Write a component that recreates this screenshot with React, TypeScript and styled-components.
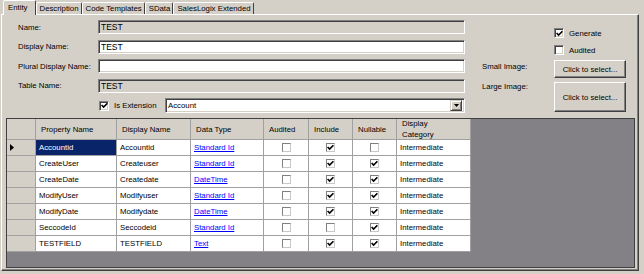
import React from "react";
import styled, { createGlobalStyle } from "styled-components";

const face = "#d4d0c8";
const shadow = "#808080";
const dark = "#404040";

const GlobalStyle = createGlobalStyle`
  body {
    margin: 0;
    background: ${face};
    font-family: "Liberation Sans", Arial, sans-serif;
    font-size: 7.8px;
    color: #000;
  }
`;

type Row = {
  name: string;
  display: string;
  type: string;
  audited: boolean;
  include: boolean;
  nullable: boolean;
};

const rows: Row[] = [
  { name: "Accountid", display: "Accountid", type: "Standard Id", audited: false, include: true, nullable: false },
  { name: "CreateUser", display: "Createuser", type: "Standard Id", audited: false, include: true, nullable: true },
  { name: "CreateDate", display: "Createdate", type: "DateTime", audited: false, include: true, nullable: true },
  { name: "ModifyUser", display: "Modifyuser", type: "Standard Id", audited: false, include: true, nullable: true },
  { name: "ModifyDate", display: "Modifydate", type: "DateTime", audited: false, include: true, nullable: true },
  { name: "SeccodeId", display: "Seccodeid", type: "Standard Id", audited: false, include: false, nullable: true },
  { name: "TESTFIELD", display: "TESTFIELD", type: "Text", audited: false, include: true, nullable: true }
];

const tabs = ["Entity", "Description", "Code Templates", "SData", "SalesLogix Extended"];

const Window = styled.div`
  margin-left: 1px;
  width: 638px;
`;

const TabStrip = styled.div`
  display: flex;
  align-items: flex-end;
  height: 14px;
  padding-left: 2px;
  position: relative;
  z-index: 1;
`;

const Tab = styled.div<{ $active?: boolean }>`
  box-sizing: border-box;
  height: ${p => (p.$active ? 15 : 12)}px;
  margin-bottom: ${p => (p.$active ? -1 : 0)}px;
  padding: ${p => (p.$active ? "0 7px 1px 4px" : "0 2px 0 3px")};
  display: flex;
  align-items: center;
  background: ${face};
  border: 1px solid;
  border-bottom: none;
  border-color: #fff ${dark} transparent #fff;
  border-radius: 2px 2px 0 0;
  white-space: nowrap;
`;

const Panel = styled.div`
  box-sizing: border-box;
  height: 257px;
  border: 1px solid;
  border-color: #fff ${dark} ${dark} #fff;
  box-shadow: inset -1px -1px ${shadow};
  display: flex;
  flex-direction: column;
`;

const FormArea = styled.div`
  display: flex;
  padding: 5px 0 0 16px;
`;

const Fields = styled.div`
  display: grid;
  grid-template-columns: 80px 367px;
  grid-template-rows: repeat(4, 14px) 15px;
  row-gap: 5.5px;
`;

const Label = styled.label`
  align-self: center;
  white-space: nowrap;
`;

const TextBox = styled.input<{ $readOnly?: boolean }>`
  box-sizing: border-box;
  width: 100%;
  height: 100%;
  margin: 0;
  padding: 0 2px;
  font: inherit;
  font-size: 8.5px;
  color: #000;
  background: ${p => (p.$readOnly ? face : "#fff")};
  border: 1px solid;
  border-color: ${shadow} #fff #fff ${shadow};
  box-shadow: inset 1px 1px ${dark}, inset -1px -1px ${face};
  outline: none;
`;

const ExtensionRow = styled.div`
  display: flex;
  align-items: center;
  padding-left: 1px;
`;

const CheckLabel = styled.span`
  margin-left: 5px;
  white-space: nowrap;
`;

const Combo = styled.div`
  box-sizing: border-box;
  display: flex;
  align-items: center;
  width: 300px;
  height: 15px;
  margin-left: auto;
  padding: 2px;
  background: #fff;
  border: 1px solid;
  border-color: ${shadow} #fff #fff ${shadow};
  box-shadow: inset 1px 1px ${dark}, inset -1px -1px ${face};
`;

const ComboText = styled.span`
  flex: 1;
`;

const ComboButton = styled.span`
  box-sizing: border-box;
  width: 12px;
  height: 11px;
  display: flex;
  align-items: center;
  justify-content: center;
  background: ${face};
  border: 1px solid;
  border-color: ${face} ${dark} ${dark} ${face};
  box-shadow: inset 1px 1px #fff, inset -1px -1px ${shadow};
`;

const Side = styled.div`
  display: flex;
  flex-direction: column;
  margin-left: 17px;
`;

const SideRow = styled.div<{ $top: number; $height: number }>`
  display: grid;
  grid-template-columns: 72px 72px;
  margin-top: ${p => p.$top}px;
  height: ${p => p.$height}px;
`;

const SideCheck = styled.div`
  grid-column: 2;
  display: flex;
  align-items: center;
`;

const SideLabel = styled.span<{ $pad: number }>`
  padding-top: ${p => p.$pad}px;
  white-space: nowrap;
`;

const Button = styled.button`
  box-sizing: border-box;
  margin: 0;
  padding: 0;
  font: inherit;
  color: #000;
  background: ${face};
  border: 1px solid;
  border-color: #fff ${dark} ${dark} #fff;
  box-shadow: inset -1px -1px ${shadow};
`;

const Box = styled.span<{ $flat?: boolean }>`
  box-sizing: border-box;
  display: inline-flex;
  align-items: center;
  justify-content: center;
  flex: none;
  width: ${p => (p.$flat ? 9 : 10)}px;
  height: ${p => (p.$flat ? 9 : 10)}px;
  background: #fff;
  border: 1px solid;
  border-color: ${shadow} ${p => (p.$flat ? "#c8c8c8" : "#fff")} ${p => (p.$flat ? "#c8c8c8" : "#fff")} ${shadow};
  box-shadow: ${p => (p.$flat ? "none" : `inset 1px 1px ${dark}, inset -1px -1px ${face}`)};
`;

const Check = ({ checked, flat }: { checked: boolean; flat?: boolean }) => (
  <Box $flat={flat}>
    {checked && (
      <svg width="7" height="7" viewBox="0 0 7 7">
        <polyline points="0.6,3 2.6,5 6.4,1.2" fill="none" stroke="#000" strokeWidth="1.6" />
      </svg>
    )}
  </Box>
);

const GridFrame = styled.div`
  flex: 1;
  margin: 5px 3px 2px 4px;
  background: #838186;
  border: 1px solid ${dark};
`;

const Table = styled.div`
  display: grid;
  grid-template-columns: 29px 81px 74px 73px 45px 44px 44px 74px;
  grid-template-rows: 21px repeat(7, 16px);
  width: max-content;
`;

type CellKind = "header" | "rowhead" | "data" | "selected";

const Cell = styled.div<{ $kind: CellKind; $center?: boolean }>`
  box-sizing: border-box;
  display: flex;
  align-items: center;
  justify-content: ${p => (p.$center ? "center" : "flex-start")};
  padding-left: ${p => (p.$center ? 0 : p.$kind === "header" ? 5 : 3)}px;
  border-right: 1px solid #a0a0a0;
  border-bottom: 1px solid #a0a0a0;
  background: ${p =>
    p.$kind === "header" || p.$kind === "rowhead" ? face : p.$kind === "selected" ? "#0a246a" : "#fff"};
  color: ${p => (p.$kind === "selected" ? "#fff" : "#000")};
  white-space: nowrap;
  line-height: 11px;
`;

const Link = styled.a`
  color: #0000ff;
  text-decoration: underline;
`;

const headers = ["", "Property Name", "Display Name", "Data Type", "Audited", "Include", "Nullable", "Display\nCategory"];

export default function App() {
  return (
    <>
      <GlobalStyle />
      <Window>
        <TabStrip>
          {tabs.map((t, i) => (
            <Tab key={t} $active={i === 0}>
              {t}
            </Tab>
          ))}
        </TabStrip>
        <Panel>
          <FormArea>
            <Fields>
              <Label>Name:</Label>
              <TextBox $readOnly readOnly value="TEST" />
              <Label>Display Name:</Label>
              <TextBox readOnly value="TEST" />
              <Label>Plural Display Name:</Label>
              <TextBox readOnly value="" />
              <Label>Table Name:</Label>
              <TextBox $readOnly readOnly value="TEST" />
              <span />
              <ExtensionRow>
                <Check checked />
                <CheckLabel>Is Extension</CheckLabel>
                <Combo>
                  <ComboText>Account</ComboText>
                  <ComboButton>
                    <svg width="5" height="3" viewBox="0 0 5 3">
                      <polygon points="0,0 5,0 2.5,3" fill="#000" />
                    </svg>
                  </ComboButton>
                </Combo>
              </ExtensionRow>
            </Fields>
            <Side>
              <SideRow $top={8} $height={9}>
                <SideCheck>
                  <Check checked />
                  <CheckLabel>Generate</CheckLabel>
                </SideCheck>
              </SideRow>
              <SideRow $top={8} $height={9}>
                <SideCheck>
                  <Check checked={false} />
                  <CheckLabel>Audited</CheckLabel>
                </SideCheck>
              </SideRow>
              <SideRow $top={6} $height={18}>
                <SideLabel $pad={2}>Small Image:</SideLabel>
                <Button>Click to select...</Button>
              </SideRow>
              <SideRow $top={4} $height={30}>
                <SideLabel $pad={0}>Large Image:</SideLabel>
                <Button>Click to select...</Button>
              </SideRow>
            </Side>
          </FormArea>
          <GridFrame>
            <Table>
              {headers.map((h, i) => (
                <Cell key={i} $kind="header">
                  {h.includes("\n") ? (
                    <span>
                      {h.split("\n")[0]}
                      <br />
                      {h.split("\n")[1]}
                    </span>
                  ) : (
                    h
                  )}
                </Cell>
              ))}
              {rows.map((r, i) => (
                <React.Fragment key={r.name}>
                  <Cell $kind="rowhead">
                    {i === 0 && (
                      <svg width="4" height="7" viewBox="0 0 4 7">
                        <polygon points="0,0 4,3.5 0,7" fill="#000" />
                      </svg>
                    )}
                  </Cell>
                  <Cell $kind={i === 0 ? "selected" : "data"}>{r.name}</Cell>
                  <Cell $kind="data">{r.display}</Cell>
                  <Cell $kind="data">
                    <Link>{r.type}</Link>
                  </Cell>
                  <Cell $kind="data" $center>
                    <Check flat checked={r.audited} />
                  </Cell>
                  <Cell $kind="data" $center>
                    <Check flat checked={r.include} />
                  </Cell>
                  <Cell $kind="data" $center>
                    <Check flat checked={r.nullable} />
                  </Cell>
                  <Cell $kind="data">Intermediate</Cell>
                </React.Fragment>
              ))}
            </Table>
          </GridFrame>
        </Panel>
      </Window>
    </>
  );
}
